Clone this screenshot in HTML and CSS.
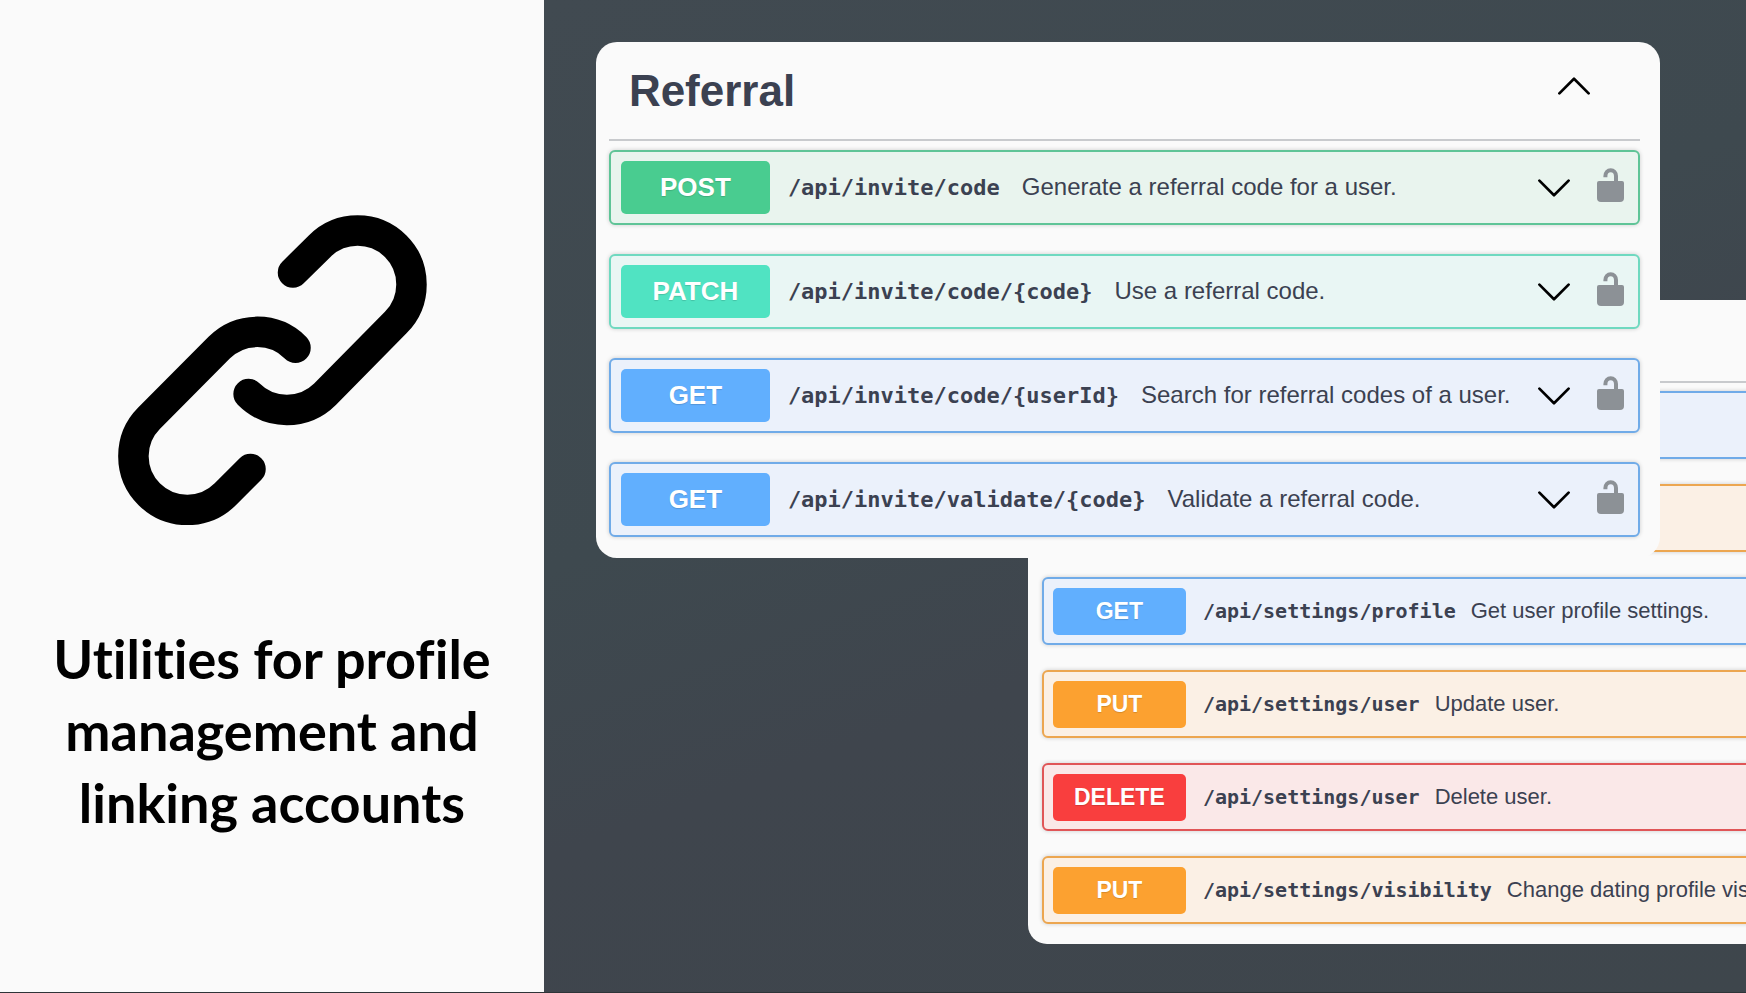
FILE: index.html
```html
<!DOCTYPE html>
<html lang="en">
<head>
<meta charset="utf-8">
<title>Utilities for profile management and linking accounts</title>
<link rel="stylesheet" href="styles.css">
</head>
<body>
<svg class="sprite" aria-hidden="true">
  <symbol id="chevron" viewBox="0 0 32 18"><path d="M1.4 1.6 16 16.2 30.6 1.6" fill="none" stroke="#000" stroke-width="2.7" stroke-linecap="round" stroke-linejoin="round"/></symbol>
  <symbol id="lock" viewBox="0 0 27 34"><path d="M8.4 9.2V8a5.3 5.8 0 0 1 10.6 0v6" fill="none" stroke="#8c9196" stroke-width="4"/><path d="M2 13h23a2 2 0 0 1 2 2v15q0 4-4 4H4q-4 0-4-4V15a2 2 0 0 1 2-2z" fill="#8c9196"/></symbol>
</svg>
<main class="slide">
  <section class="intro">
    <svg class="link-icon" viewBox="117 215 310 310" fill="none" stroke="#000" stroke-width="30.5" stroke-linecap="round" stroke-linejoin="round" aria-hidden="true">
      <path d="M293 272.5 319.5 246.3A53 53 0 0 1 395.7 322.5L325 394.2A54 54 0 0 1 248.6 394"/>
      <path d="M295.5 347.7A54 54 0 0 0 219.3 347.5L149 418.2A53 53 0 0 0 225.5 494L250.5 469"/>
    </svg>
    <h1 class="intro-title">Utilities for profile management and linking accounts</h1>
  </section>
  <section class="stage">
    <article class="card card-back">
      <div class="card-head"></div>
      <div class="rows">
        <div class="row get"></div>
        <div class="row put"></div>
        <div class="row get"><span class="method">GET</span><div class="info"><code class="path">/api/settings/profile</code><span class="desc">Get user profile settings.</span></div></div>
        <div class="row put"><span class="method">PUT</span><div class="info"><code class="path">/api/settings/user</code><span class="desc">Update user.</span></div></div>
        <div class="row delete"><span class="method">DELETE</span><div class="info"><code class="path">/api/settings/user</code><span class="desc">Delete user.</span></div></div>
        <div class="row put"><span class="method">PUT</span><div class="info"><code class="path">/api/settings/visibility</code><span class="desc">Change dating profile visibility.</span></div></div>
      </div>
    </article>
    <article class="card card-front">
      <header class="card-head">
        <h2 class="card-title">Referral</h2>
        <button class="icon-button collapse" type="button" aria-label="Collapse Referral"><svg class="chevron up"><use href="#chevron"/></svg></button>
      </header>
      <div class="rows">
        <div class="row post"><span class="method">POST</span><div class="info"><code class="path">/api/invite/code</code><span class="desc">Generate a referral code for a user.</span></div>
          <button class="icon-button" type="button" aria-label="Expand"><svg class="chevron"><use href="#chevron"/></svg></button><button class="icon-button" type="button" aria-label="Authorize"><svg class="lock"><use href="#lock"/></svg></button></div>
        <div class="row patch"><span class="method">PATCH</span><div class="info"><code class="path">/api/invite/code/{code}</code><span class="desc">Use a referral code.</span></div>
          <button class="icon-button" type="button" aria-label="Expand"><svg class="chevron"><use href="#chevron"/></svg></button><button class="icon-button" type="button" aria-label="Authorize"><svg class="lock"><use href="#lock"/></svg></button></div>
        <div class="row get"><span class="method">GET</span><div class="info"><code class="path">/api/invite/code/{userId}</code><span class="desc">Search for referral codes of a user.</span></div>
          <button class="icon-button" type="button" aria-label="Expand"><svg class="chevron"><use href="#chevron"/></svg></button><button class="icon-button" type="button" aria-label="Authorize"><svg class="lock"><use href="#lock"/></svg></button></div>
        <div class="row get"><span class="method">GET</span><div class="info"><code class="path">/api/invite/validate/{code}</code><span class="desc">Validate a referral code.</span></div>
          <button class="icon-button" type="button" aria-label="Expand"><svg class="chevron"><use href="#chevron"/></svg></button><button class="icon-button" type="button" aria-label="Authorize"><svg class="lock"><use href="#lock"/></svg></button></div>
      </div>
    </article>
  </section>
</main>
</body>
</html>
```
FILE: styles.css
```css
* { box-sizing: border-box; }

body {
  margin: 0;
  background: #fafafa;
  color: #3b4151;
  font-family: "Liberation Sans", Arial, sans-serif;
}

.sprite { display: none; }

.slide {
  display: grid;
  grid-template-columns: 31.15% minmax(0, 1fr);
  min-height: 100vh;
  overflow: hidden;
  border-bottom: 1px solid #2e3438;
}

/* Left panel */
.intro {
  display: flex;
  flex-direction: column;
  align-items: center;
  gap: 98px;
  padding: 215px 32px 0;
}

.link-icon { width: 310px; height: 310px; }

.intro-title {
  margin: 0;
  max-width: 480px;
  color: #000;
  font: 700 54px/72px Lato, "Open Sans", sans-serif;
  font-variant-ligatures: none;
  text-align: center;
}

/* Right panel: two overlapping cards share one grid cell */
.stage {
  display: grid;
  align-items: start;
  overflow: hidden;
  background: linear-gradient(160deg, #414a51, #3e494f 40%, #3f454d 60%, #3e464c);
}

.card {
  grid-area: 1 / 1;
  min-width: 0;
  background: #fafafa;
}

.card-front {
  z-index: 1;
  margin: 42px 86px 0 52px;
  padding: 0 20px 21px 13px;
  border-radius: 21px;
}

.card-back {
  margin: 300px -232px 0 484px;
  padding: 0 18px 20px 14px;
  border-radius: 19px;
}

.card-head {
  display: flex;
  align-items: center;
  justify-content: space-between;
  height: 99px;
  margin-bottom: 9px;
  padding: 0 50px 0 20px;
  border-bottom: 2px solid #c8cacd;
}

.card-back .card-head { height: 83px; margin-bottom: 8px; }

.card-title { margin: 0; font-size: 44px; line-height: 52px; }

.rows { display: flex; flex-direction: column; gap: 29px; }
.card-back .rows { gap: 25px; }

.row {
  display: flex;
  align-items: center;
  height: 75px;
  padding: 9px 14px 9px 10px;
  border: 2px solid var(--line);
  border-radius: 6px;
  background: var(--tint);
  box-shadow: 0 0 4px rgba(0, 0, 0, 0.19);
}

.card-back .row { height: 68px; padding-left: 9px; }

.method {
  flex: none;
  width: 149px;
  border-radius: 5px;
  background: var(--solid);
  color: #fff;
  font-size: 26px;
  font-weight: 700;
  line-height: 53px;
  text-align: center;
  text-shadow: 0 1px 1px rgba(0, 0, 0, 0.15);
}

.card-back .method { width: 133px; font-size: 23px; line-height: 47px; }

.info {
  display: flex;
  flex: 1;
  align-items: baseline;
  gap: 22px;
  min-width: 0;
  padding-left: 18px;
  white-space: nowrap;
}

.card-back .info { gap: 15px; padding-left: 17px; }

.path { font: 700 22px/30px "DejaVu Sans Mono", monospace; }
.desc { font-size: 24px; line-height: 30px; }
.card-back .path { font-size: 20px; }
.card-back .desc { font-size: 22px; }

.icon-button {
  display: flex;
  flex: none;
  margin: 0 0 0 27px;
  padding: 0;
  border: 0;
  background: none;
}

.collapse { margin-bottom: 10px; }
.chevron { width: 32px; height: 18px; }
.up { transform: rotate(180deg); }
.lock { width: 27px; height: 34px; margin-bottom: 6px; }

.post { --line: #5fc497; --solid: #49cc90; --tint: #e9f4ee; }
.patch { --line: #6fd9c0; --solid: #50e3c2; --tint: #e9f6f4; }
.get { --line: #70abe8; --solid: #61affe; --tint: #ebf1fb; }
.put { --line: #eca650; --solid: #fca130; --tint: #fbf0e5; }
.delete { --line: #e05557; --solid: #f93e3e; --tint: #fae8e8; }
```
